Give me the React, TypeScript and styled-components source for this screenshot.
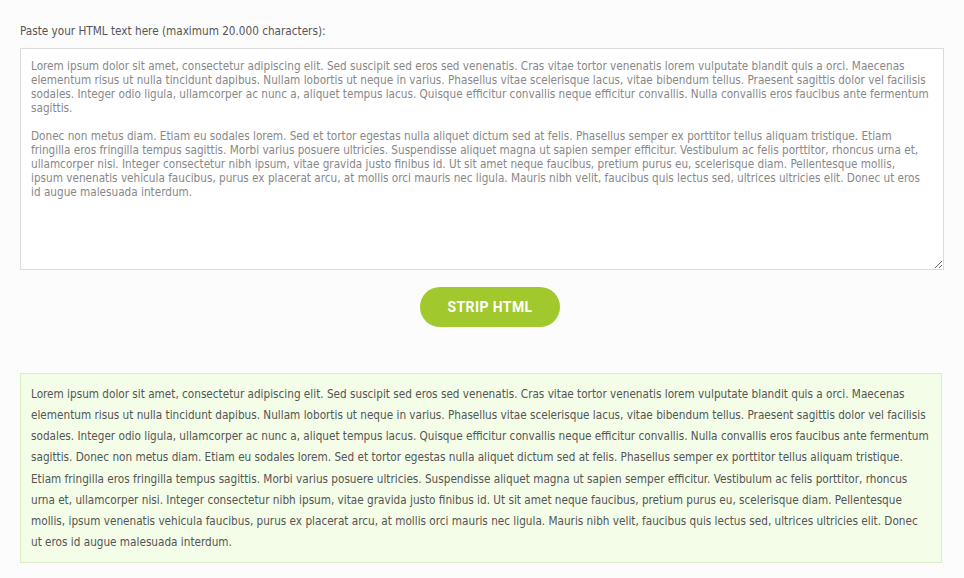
import React from "react";
import styled, { createGlobalStyle } from "styled-components";

const Global = createGlobalStyle`
  html, body { margin: 0; padding: 0; background: #fcfcfc; }
  body { font-family: "DejaVu Sans Condensed", "DejaVu Sans", Verdana, sans-serif; }
`;

const Page = styled.div`
  padding: 24px 20px 16px 20px;
  display: flex;
  flex-direction: column;
`;

const Label = styled.label`
  font-family: "DejaVu Sans Condensed", "DejaVu Sans", sans-serif;
  font-stretch: condensed;
  font-size: 11.67px;
  color: #555;
  line-height: 14px;
  margin-bottom: 10px;
`;

const Area = styled.textarea`
  display: block;
  box-sizing: border-box;
  width: 924px;
  height: 222px;
  margin: 0;
  padding: 10px 14px 10px 10px;
  border: 1px solid #dcdcdc;
  background: #fff;
  font-family: "DejaVu Sans Condensed", "DejaVu Sans", sans-serif;
  font-stretch: condensed;
  font-size: 11.67px;
  line-height: 14px;
  color: #888;
  resize: both;
  outline: none;
`;

const ButtonRow = styled.div`
  display: flex;
  justify-content: center;
  padding: 17px 0 46px 16px;
`;

const Button = styled.button`
  width: 140px;
  height: 40px;
  border: none;
  border-radius: 20px;
  background: #a1c82d;
  color: #fff;
  font-family: Roboto, "Open Sans", sans-serif;
  font-weight: 700;
  font-size: 14px;
  letter-spacing: 0.4px;
  cursor: pointer;
`;

const Output = styled.div`
  box-sizing: border-box;
  width: 922px;
  padding: 10px 10px 9px 10px;
  background: #f3fde7;
  border: 1px solid #dbecc8;
  font-family: "DejaVu Sans Condensed", "DejaVu Sans", sans-serif;
  font-stretch: condensed;
  font-size: 11.67px;
  line-height: 21.15px;
  color: #555;
`;

const p1 =
  "Lorem ipsum dolor sit amet, consectetur adipiscing elit. Sed suscipit sed eros sed venenatis. Cras vitae tortor venenatis lorem vulputate blandit quis a orci. Maecenas elementum risus ut nulla tincidunt dapibus. Nullam lobortis ut neque in varius. Phasellus vitae scelerisque lacus, vitae bibendum tellus. Praesent sagittis dolor vel facilisis sodales. Integer odio ligula, ullamcorper ac nunc a, aliquet tempus lacus. Quisque efficitur convallis neque efficitur convallis. Nulla convallis eros faucibus ante fermentum sagittis.";
const p2 =
  "Donec non metus diam. Etiam eu sodales lorem. Sed et tortor egestas nulla aliquet dictum sed at felis. Phasellus semper ex porttitor tellus aliquam tristique. Etiam fringilla eros fringilla tempus sagittis. Morbi varius posuere ultricies. Suspendisse aliquet magna ut sapien semper efficitur. Vestibulum ac felis porttitor, rhoncus urna et, ullamcorper nisi. Integer consectetur nibh ipsum, vitae gravida justo finibus id. Ut sit amet neque faucibus, pretium purus eu, scelerisque diam. Pellentesque mollis, ipsum venenatis vehicula faucibus, purus ex placerat arcu, at mollis orci mauris nec ligula. Mauris nibh velit, faucibus quis lectus sed, ultrices ultricies elit. Donec ut eros id augue malesuada interdum.";

export default function App() {
  return (
    <>
      <Global />
      <Page>
        <Label htmlFor="src">Paste your HTML text here (maximum 20.000 characters):</Label>
        <Area id="src" defaultValue={p1 + "\n\n" + p2} spellCheck={false} />
        <ButtonRow>
          <Button>STRIP HTML</Button>
        </ButtonRow>
        <Output>{p1 + " " + p2}</Output>
      </Page>
    </>
  );
}
